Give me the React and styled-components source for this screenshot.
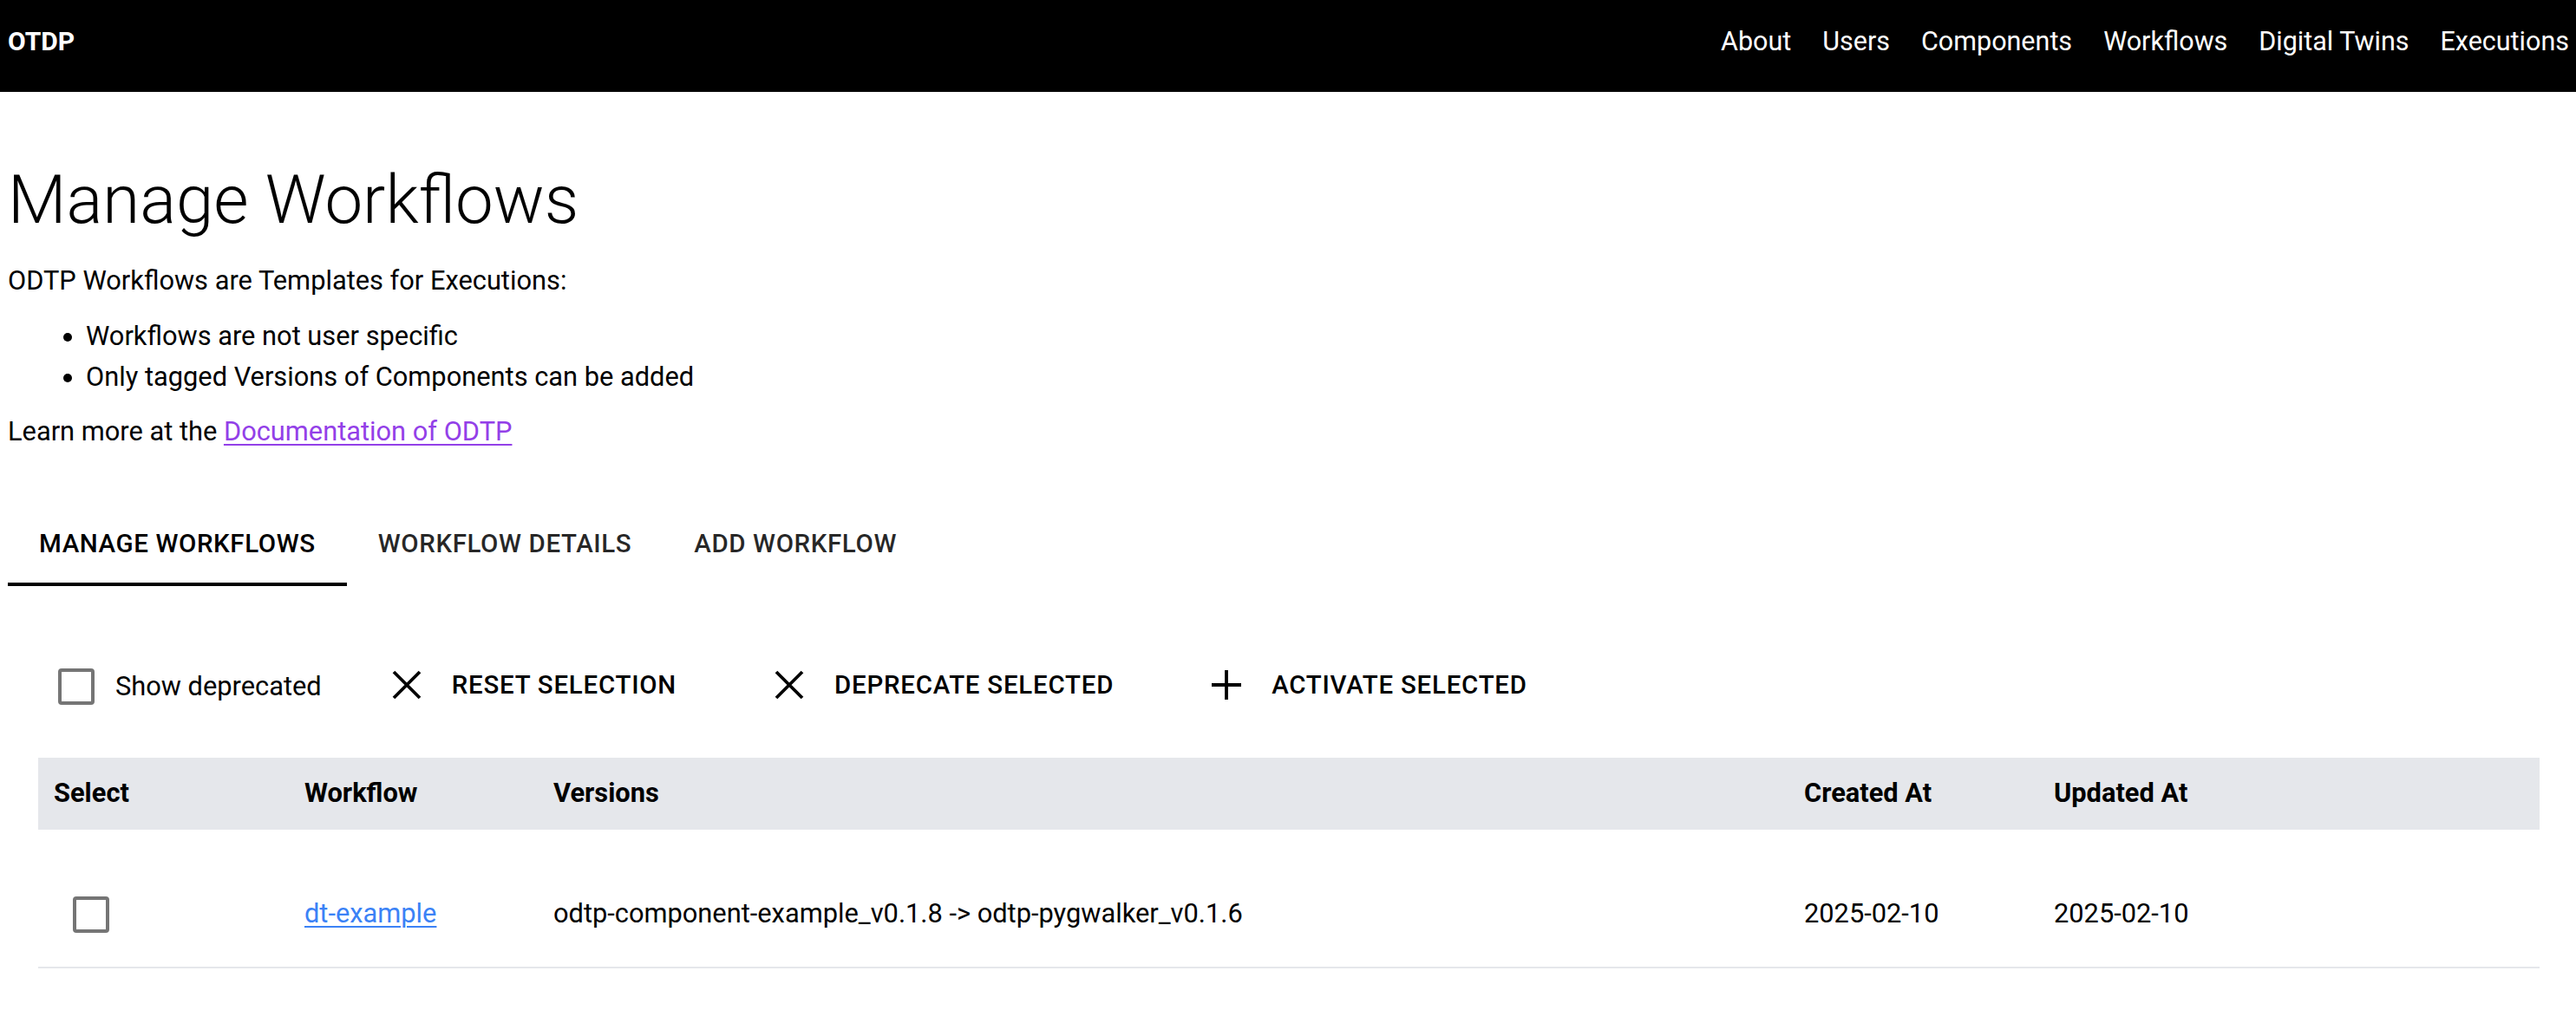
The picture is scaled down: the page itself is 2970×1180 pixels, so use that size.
import React from 'react';
import styled, { createGlobalStyle } from 'styled-components';

const GlobalStyle = createGlobalStyle`
  html, body {
    margin: 0;
    padding: 0;
    background: #fff;
  }
  body {
    font-family: Roboto, "Liberation Sans", Arial, sans-serif;
    font-size: 30.8px;
    line-height: 45px;
    color: #000;
  }
  * {
    box-sizing: border-box;
  }
`;

const TopBar = styled.header`
  height: 106px;
  background: #000;
  color: #fff;
  display: flex;
  align-items: flex-start;
  justify-content: space-between;
  padding: 25px 8px 0 9px;
`;

const Brand = styled.div`
  font-size: 30px;
  font-weight: 700;
  line-height: 45px;
`;

const NavList = styled.nav`
  display: flex;
  gap: 36px;
`;

const NavLink = styled.a`
  color: #fff;
  text-decoration: none;
  font-size: 30.5px;
  line-height: 45px;
`;

const Main = styled.main`
  padding: 0 9px;
`;

const Title = styled.h1`
  margin: 78px 0 0;
  font-size: 78px;
  font-weight: 300;
  line-height: 1.2;
`;

const Text = styled.p`
  margin: ${p => p.$top || 0}px 0 0;
`;

const BulletList = styled.ul`
  margin: 18px 0 0;
  padding-left: 90px;
  line-height: 47px;
`;

const DocLink = styled.a`
  color: #9340e8;
  text-decoration: underline;
  text-decoration-thickness: 2px;
  text-underline-offset: 4px;
`;

const TabBar = styled.div`
  display: flex;
  margin-top: 58px;
`;

const Tab = styled.button`
  font-family: inherit;
  font-size: 29.5px;
  font-weight: 500;
  letter-spacing: 0.6px;
  text-transform: uppercase;
  line-height: 34px;
  padding: 32px 36px 28px;
  background: none;
  border: none;
  border-bottom: 4px solid ${p => (p.$active ? '#000' : 'transparent')};
  color: ${p => (p.$active ? '#000' : 'rgba(0, 0, 0, 0.85)')};
  cursor: pointer;
`;

const Toolbar = styled.div`
  display: flex;
  align-items: center;
  gap: 51px;
  height: 90px;
  margin-top: 71px;
  padding-left: 58px;
`;

const CheckLabel = styled.label`
  display: flex;
  align-items: center;
  gap: 24px;
`;

const CheckBox = styled.span`
  display: inline-block;
  width: 42px;
  height: 42px;
  border: 4px solid #757575;
  border-radius: 4px;
  margin-left: ${p => p.$indent || 0}px;
  vertical-align: middle;
`;

const ActionButton = styled.button`
  display: flex;
  align-items: center;
  gap: 35px;
  padding: 12px 32px 12px 30px;
  margin-top: -4px;
  background: none;
  border: none;
  font-family: inherit;
  font-size: 29.4px;
  font-weight: 500;
  letter-spacing: 0.8px;
  text-transform: uppercase;
  color: #000;
  cursor: pointer;
`;

const Table = styled.table`
  margin: 37px 33px 0 35px;
  width: calc(100% - 68px);
  border-collapse: collapse;
  table-layout: fixed;
`;

const HeadRow = styled.tr`
  background: #e5e7eb;
`;

const HeadCell = styled.th`
  text-align: left;
  font-weight: 700;
  padding: 18px 18px 20px;
  line-height: 45px;
`;

const BodyRow = styled.tr`
  border-bottom: 2px solid #e5e7eb;
`;

const Cell = styled.td`
  vertical-align: top;
  padding: 74px 18px 39px;
  line-height: 45px;
  white-space: nowrap;
`;

const RowLink = styled.a`
  color: #3b82f6;
  text-decoration: underline;
  text-decoration-thickness: 2px;
  text-underline-offset: 4px;
`;

const CloseIcon = () => (
  <svg width="34" height="34" viewBox="0 0 34 34" fill="none" stroke="#000" strokeWidth="3.8">
    <path d="M2 2 L32 32 M32 2 L2 32" />
  </svg>
);

const PlusIcon = () => (
  <svg width="34" height="34" viewBox="0 0 34 34" fill="none" stroke="#000" strokeWidth="3.8">
    <path d="M17 0 L17 34 M0 17 L34 17" />
  </svg>
);

const navItems = ['About', 'Users', 'Components', 'Workflows', 'Digital Twins', 'Executions'];

const rows = [
  {
    name: 'dt-example',
    versions: 'odtp-component-example_v0.1.8 -> odtp-pygwalker_v0.1.6',
    created: '2025-02-10',
    updated: '2025-02-10',
  },
];

export default function App() {
  return (
    <>
      <GlobalStyle />
      <TopBar>
        <Brand>OTDP</Brand>
        <NavList>
          {navItems.map(item => (
            <NavLink key={item} href="#">{item}</NavLink>
          ))}
        </NavList>
      </TopBar>

      <Main>
        <Title>Manage Workflows</Title>
        <Text $top={23}>ODTP Workflows are Templates for Executions:</Text>
        <BulletList>
          <li>Workflows are not user specific</li>
          <li>Only tagged Versions of Components can be added</li>
        </BulletList>
        <Text $top={17}>
          Learn more at the <DocLink href="#">Documentation of ODTP</DocLink>
        </Text>

        <TabBar>
          <Tab $active>Manage Workflows</Tab>
          <Tab>Workflow Details</Tab>
          <Tab>Add Workflow</Tab>
        </TabBar>

        <Toolbar>
          <CheckLabel>
            <CheckBox />
            Show deprecated
          </CheckLabel>
          <ActionButton>
            <CloseIcon />
            Reset Selection
          </ActionButton>
          <ActionButton>
            <CloseIcon />
            Deprecate Selected
          </ActionButton>
          <ActionButton>
            <PlusIcon />
            Activate Selected
          </ActionButton>
        </Toolbar>

        <Table>
          <colgroup>
            <col style={{ width: 289 }} />
            <col style={{ width: 287 }} />
            <col />
            <col style={{ width: 288 }} />
            <col style={{ width: 578 }} />
          </colgroup>
          <thead>
            <HeadRow>
              <HeadCell>Select</HeadCell>
              <HeadCell>Workflow</HeadCell>
              <HeadCell>Versions</HeadCell>
              <HeadCell>Created At</HeadCell>
              <HeadCell>Updated At</HeadCell>
            </HeadRow>
          </thead>
          <tbody>
            {rows.map(row => (
              <BodyRow key={row.name}>
                <Cell>
                  <CheckBox $indent={22} />
                </Cell>
                <Cell>
                  <RowLink href="#">{row.name}</RowLink>
                </Cell>
                <Cell>{row.versions}</Cell>
                <Cell>{row.created}</Cell>
                <Cell>{row.updated}</Cell>
              </BodyRow>
            ))}
          </tbody>
        </Table>
      </Main>
    </>
  );
}
